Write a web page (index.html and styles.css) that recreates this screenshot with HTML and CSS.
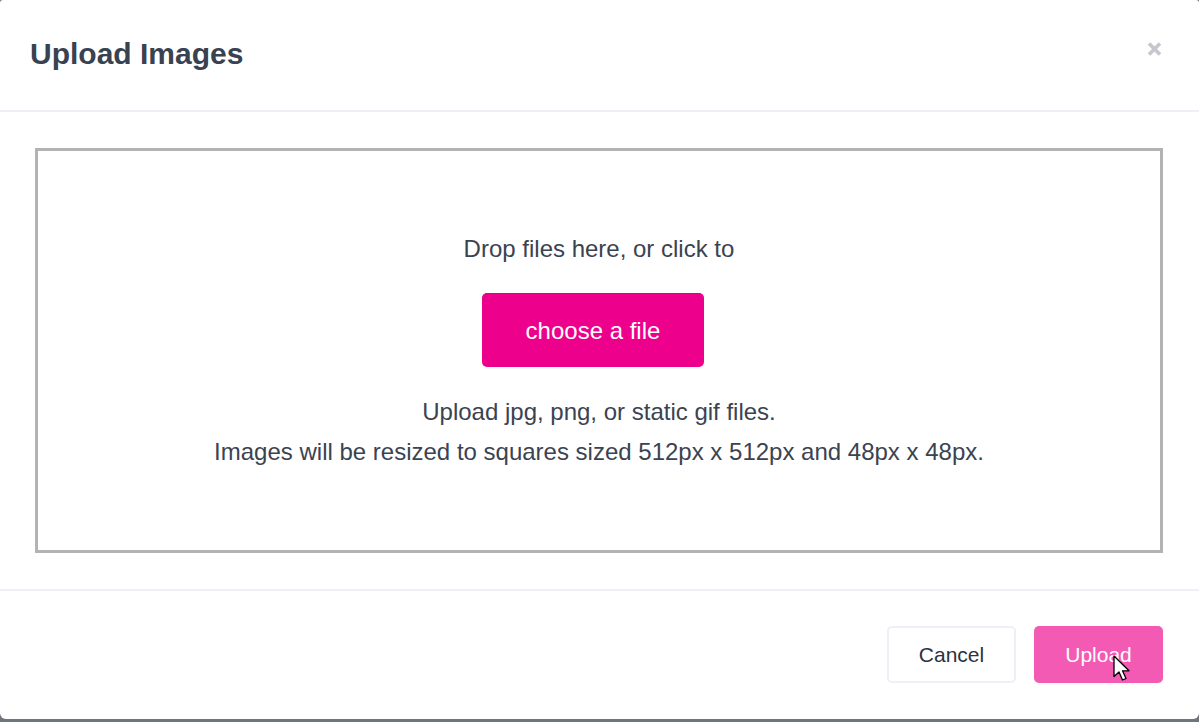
FILE: index.html
```html
<!DOCTYPE html>
<html lang="en">
<head>
<meta charset="utf-8">
<title>Upload Images</title>
<link rel="stylesheet" href="styles.css">
</head>
<body>
<div class="modal">
  <div class="modal-header">
    <h2 class="modal-title">Upload Images</h2>
    <button class="close" type="button" aria-label="Close">
      <svg width="15" height="14" viewBox="0 0 15 14"><path d="M2 1.5 L13 12.5 M13 1.5 L2 12.5" stroke="#c4c8cd" stroke-width="3.6" fill="none"/></svg>
    </button>
  </div>
  <div class="modal-body">
    <div class="dropzone">
      <p class="dz-line">Drop files here, or click to</p>
      <button class="choose" type="button">choose a file</button>
      <p class="dz-line dz-hint">Upload jpg, png, or static gif files.</p>
      <p class="dz-line">Images will be resized to squares sized 512px x 512px and 48px x 48px.</p>
    </div>
  </div>
  <div class="modal-footer">
    <button class="btn btn-cancel" type="button">Cancel</button>
    <button class="btn btn-upload" type="button">Upload</button>
  </div>
</div>
<svg class="cursor" width="20" height="28" viewBox="0 0 20 28"><path d="M1 1 L1 21.5 L6 17 L9.5 25 L13 23.5 L9.5 15.8 L16 15.8 Z" fill="#fff" stroke="#000" stroke-width="1.3" stroke-linejoin="round"/></svg>
</body>
</html>
```

FILE: styles.css
```css
html, body {
  margin: 0;
  padding: 0;
}
body {
  width: 1199px;
  height: 722px;
  overflow: hidden;
  background: #6d757d;
  font-family: "Liberation Sans", Arial, Helvetica, sans-serif;
  color: #3b4351;
  position: relative;
}
.modal {
  background: #fff;
  border-radius: 3px 3px 6px 6px;
  display: flex;
  flex-direction: column;
}
.modal-header {
  display: flex;
  justify-content: space-between;
  align-items: flex-start;
  padding: 36px 37px 38px 30px;
  border-bottom: 2px solid #edf0f4;
}
.modal-title {
  margin: 0;
  font-size: 30px;
  line-height: 36px;
  font-weight: 700;
  color: #394250;
}
.close {
  margin: 6px 0 0 0;
  padding: 0;
  border: 0;
  background: none;
  width: 15px;
  height: 14px;
  display: block;
}
.close svg { display: block; }
.modal-body {
  padding: 36px 36px 36px 35px;
}
.dropzone {
  box-sizing: border-box;
  height: 405px;
  border: 3px solid #b3b3b3;
  display: flex;
  flex-direction: column;
  align-items: center;
  justify-content: center;
}
.dz-line {
  margin: 0;
  font-size: 24px;
  line-height: 40px;
  color: #3b4351;
}
.choose {
  margin: 24px 12px 25px 0;
  width: 222px;
  height: 74px;
  border: 0;
  border-top: 1px solid #e00085;
  border-radius: 5px;
  background: #ec008c;
  color: #fff;
  font-family: inherit;
  font-size: 24px;
  padding: 0;
}
.modal-footer {
  display: flex;
  justify-content: flex-end;
  gap: 18px;
  padding: 35px 36px 36px;
  border-top: 2px solid #edf0f4;
}
.btn {
  box-sizing: border-box;
  width: 129px;
  height: 57px;
  border-radius: 5px;
  font-family: inherit;
  font-size: 21px;
  padding: 0;
}
.btn-cancel {
  background: #fff;
  border: 2px solid #edf1f5;
  color: #2c3240;
}
.btn-upload {
  background: #f35ab4;
  border: 0;
  color: #fff;
}
.cursor {
  position: absolute;
  left: 1113px;
  top: 655px;
}
```
